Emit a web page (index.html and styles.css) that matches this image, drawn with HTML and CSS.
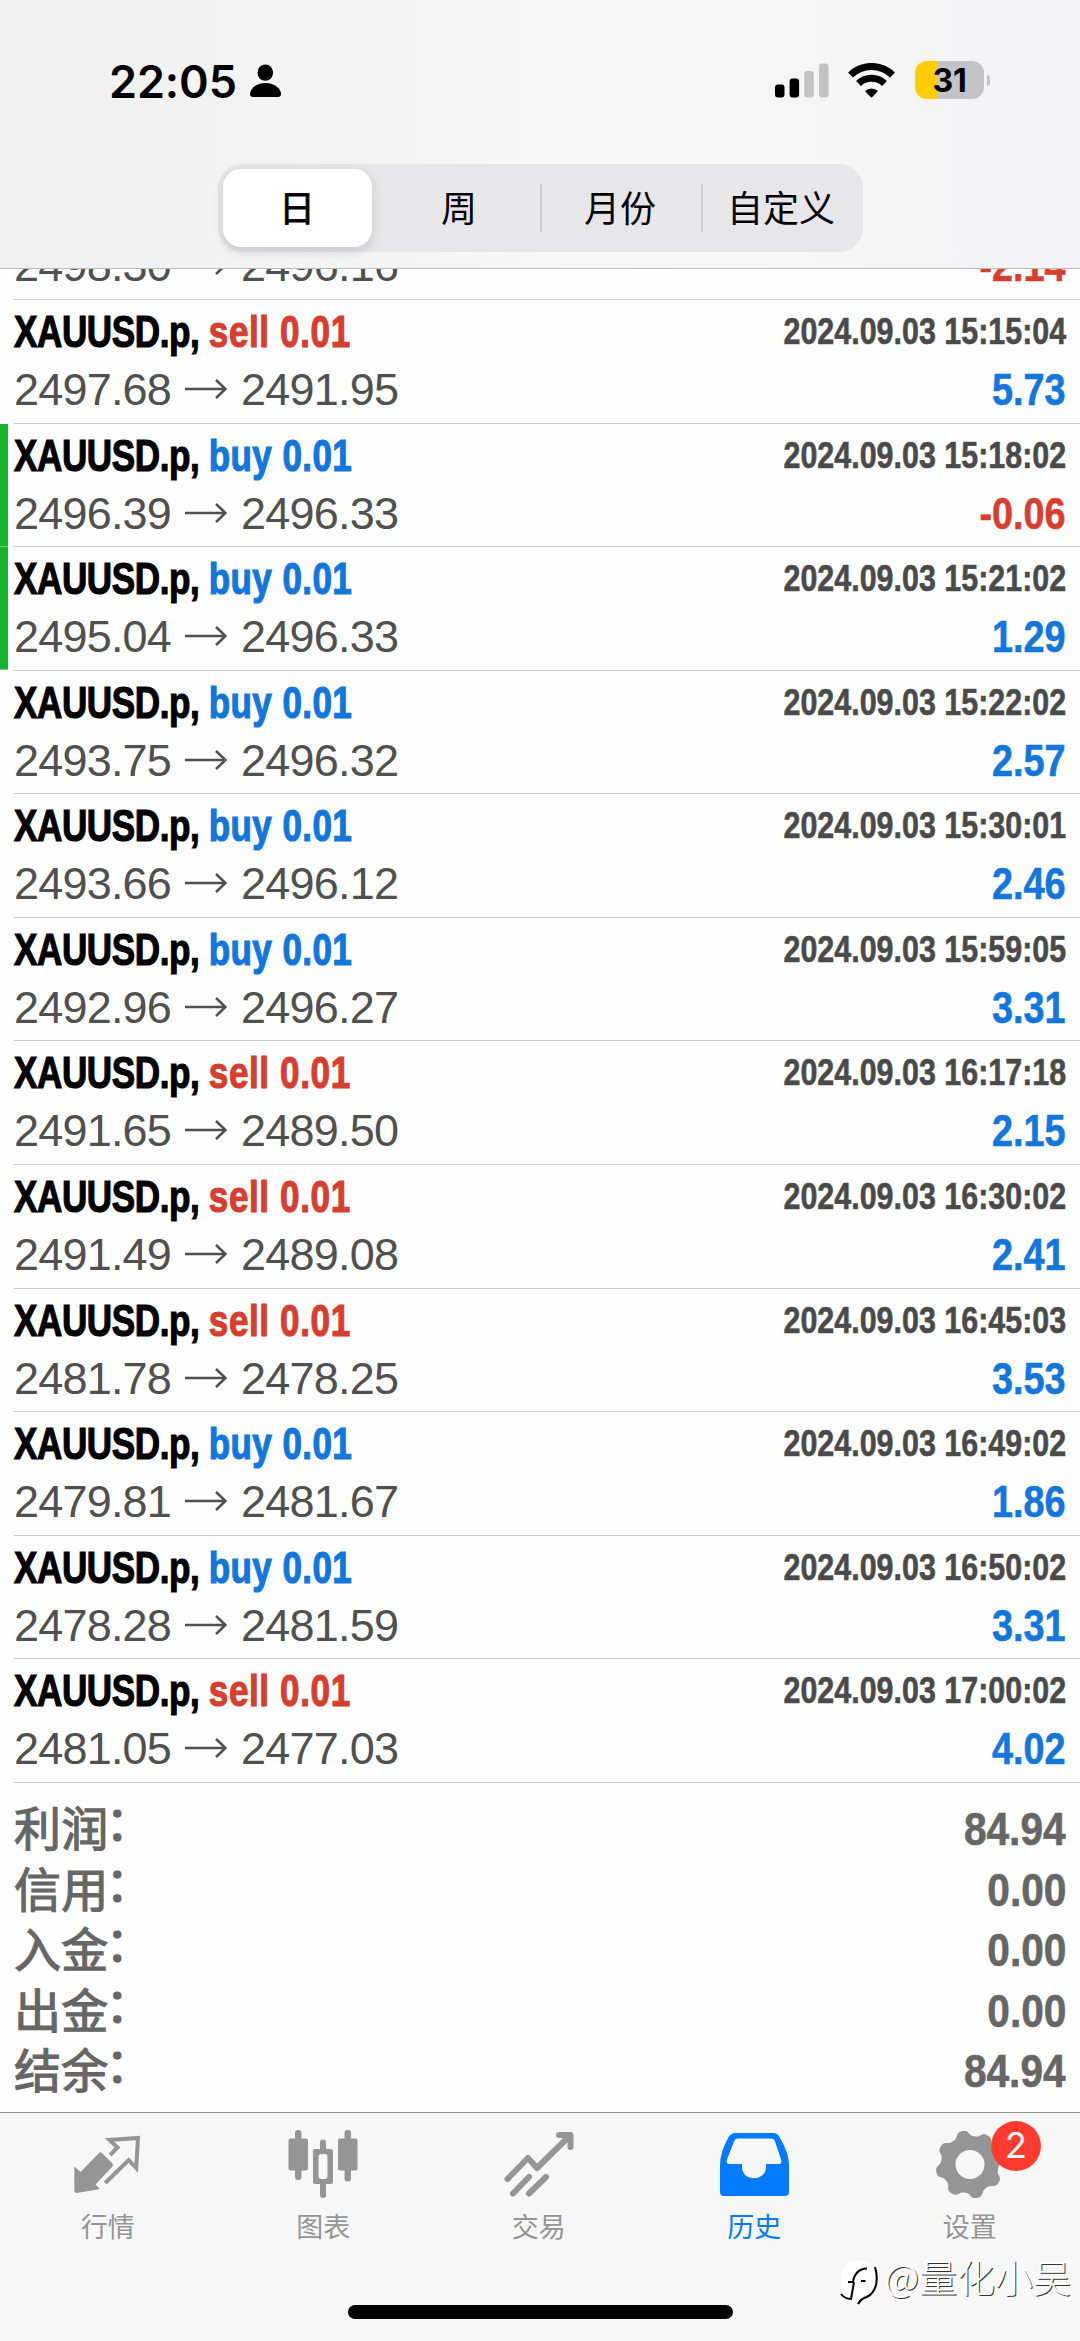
FILE: index.html
```
<!DOCTYPE html>
<html lang="zh-CN">
  <head>
    <meta charset="utf-8">
    <title>历史</title>
    <link rel="stylesheet" href="styles.css">
  </head>
  <body>
    <header class="header">
      <div class="status">
        <span class="time">22:05</span>
        <svg class="person" width="32" height="34" viewBox="250 64 32 34">
          <ellipse cx="265.3" cy="72.6" rx="7.8" ry="8.2"/>
          <path d="M250 94c0-5 6-11 15.500-11s15.500 6 15.500 11c0 2-1 3-3 3h-25c-2 0-3-1-3-3z"/>
        </svg>
        <svg class="signal" width="54" height="35" viewBox="775 62.500 54 35">
          <rect x="775" y="84" width="9.500" height="13" rx="3"/>
          <rect x="789.600" y="78" width="9.500" height="19" rx="3"/>
          <rect class="off" x="804.300" y="70.500" width="9.500" height="26.500" rx="3"/>
          <rect class="off" x="819" y="63" width="9.500" height="34" rx="3"/>
        </svg>
        <svg class="wifi" width="47" height="35" viewBox="848 62.500 47 35">
          <path class="arc" d="M850.500 74.500a30 30 0 0 1 42 0M858.500 83a19 19 0 0 1 26 0"/>
          <path d="M865 90.500a9.500 9.500 0 0 1 13 0l-5.300 5.800q-1.200 1.200-2.400 0z"/>
        </svg>
        <div class="battery"><span>31</span></div>
        <i class="nub"></i>
      </div>
      <nav class="segments">
        <a class="seg on">日</a>
        <a class="seg">周</a>
        <a class="seg line">月份</a>
        <a class="seg line">自定义</a>
      </nav>
    </header>

    <div id="deals"></div>

    <div class="summary">
      <p><b>利润<i>：</i></b><span>84.94</span></p>
      <p><b>信用<i>：</i></b><span>0.00</span></p>
      <p><b>入金<i>：</i></b><span>0.00</span></p>
      <p><b>出金<i>：</i></b><span>0.00</span></p>
      <p><b>结余<i>：</i></b><span>84.94</span></p>
    </div>

    <footer class="tabs">
      <a class="tab">
        <svg width="80" height="76" viewBox="68 2126 80 76">
          <path d="M74.300 2166.500l6.200 5.500 18.500-19q1.500-1.500 3 0l10.500 10.500q1 1.500 0 3l-17 18 4 4q0 1-2 1l-21 3.500q-2.200 0-2.200-2z"/>
          <path class="thin" d="M110 2155l7.500-7.500-8-7.500 28.500-2-1.800 30-7.500-8-23.500 23"/>
        </svg>
        <span>行情</span>
      </a>
      <a class="tab">
        <svg width="80" height="76" viewBox="283 2126 80 76">
          <rect x="288.500" y="2138.500" width="19.500" height="32" rx="2"/>
          <rect x="295" y="2130" width="6.500" height="50" rx="3"/>
          <rect x="338" y="2138.500" width="19.500" height="32" rx="2"/>
          <rect x="344.500" y="2130" width="6.500" height="51.500" rx="3"/>
          <path fill-rule="evenodd" d="M320 2149v-6.500q0-3 3-3t3 3v6.500h5q2 0 2 2v31q0 2-2 2h-5v11q0 3-3 3t-3-3v-11h-5q-2 0-2-2v-31q0-2 2-2zM321.500 2154q-3 0-3 3v19q0 3 3 3h3q3 0 3-3v-19q0-3-3-3z"/>
        </svg>
        <span>图表</span>
      </a>
      <a class="tab">
        <svg width="80" height="76" viewBox="499 2126 80 76">
          <path class="stroke" d="M507.500 2179l20.500-21 9 10 33-32.500M559 2135h11.500v12M513 2193.500l16-16.500M529 2193.500l17-16.500"/>
        </svg>
        <span>交易</span>
      </a>
      <a class="tab on">
        <svg width="80" height="76" viewBox="714 2126 80 76">
          <path fill-rule="evenodd" d="M735 2133h38q5 0 7 5 9 15 9 27v27q0 4-4 4h-61q-4 0-4-4v-27q0-12 8-27 3-5 7-5zM738 2138.500q-3 0-4 3l-7 18q-1 4.500 2 4.500h13v3c0 15 24 15 24 0v-3h13q3 0 2-4.500l-6-18q-1-3-4-3z"/>
        </svg>
        <span>历史</span>
      </a>
      <a class="tab">
        <svg width="80" height="76" viewBox="930 2126 80 76">
          <path id="gear" fill-rule="evenodd" d=""/>
        </svg>
        <span>设置</span>
        <em class="badge">2</em>
      </a>
      <i class="home"></i>
    </footer>

    <div class="watermark">
      <svg width="40" height="46" viewBox="838 2260 40 46">
        <path class="bubble" d="M858 2261c12 0 17 5 17 18s-5 17-12 18l-6 5-3-4c-10 0-14-5-14-18 0-14 5-19 18-19z"/>
        <path class="mark" d="M840 2294q4 5 10 5l3-17M847 2282h5q2-13 14-13.500M860 2281h4.500M874 2267q4 14-1 23-3 6-10 8-4 2-6 6"/>
      </svg>
      <span>@量化小吴</span>
    </div>

    <script>
      // type, open, close, time, profit, marked
      var deals = [
        ["sell", "2498.30", "2496.16", "2024.09.03 15:12:02", "-2.14"],
        ["sell", "2497.68", "2491.95", "2024.09.03 15:15:04", "5.73"],
        ["buy", "2496.39", "2496.33", "2024.09.03 15:18:02", "-0.06", 1],
        ["buy", "2495.04", "2496.33", "2024.09.03 15:21:02", "1.29", 1],
        ["buy", "2493.75", "2496.32", "2024.09.03 15:22:02", "2.57"],
        ["buy", "2493.66", "2496.12", "2024.09.03 15:30:01", "2.46"],
        ["buy", "2492.96", "2496.27", "2024.09.03 15:59:05", "3.31"],
        ["sell", "2491.65", "2489.50", "2024.09.03 16:17:18", "2.15"],
        ["sell", "2491.49", "2489.08", "2024.09.03 16:30:02", "2.41"],
        ["sell", "2481.78", "2478.25", "2024.09.03 16:45:03", "3.53"],
        ["buy", "2479.81", "2481.67", "2024.09.03 16:49:02", "1.86"],
        ["buy", "2478.28", "2481.59", "2024.09.03 16:50:02", "3.31"],
        ["sell", "2481.05", "2477.03", "2024.09.03 17:00:02", "4.02"]
      ];
      var arrow = '<svg class="arrow" width="42" height="20" viewBox="0 0 42 20"><path d="M0 10h40M31 1l9.500 9-9.500 9"/></svg>';
      var html = "";
      for (var i = 0; i < deals.length; i++) {
        var d = deals[i];
        html += '<div class="deal' + (d[5] ? ' marked' : '') + '"><div class="body">' +
          '<div class="top"><span class="symbol">XAUUSD.p, <span class="' + d[0] + '">' + d[0] + ' 0.01</span></span>' +
          '<span class="date">' + d[3] + '</span></div>' +
          '<div class="bottom"><span class="price">' + d[1] + arrow + d[2] + '</span>' +
          '<span class="profit ' + (d[4] < 0 ? 'sell' : 'buy') + '">' + d[4] + '</span></div></div></div>';
      }
      document.getElementById("deals").innerHTML = html;

      // gear outline with 8 rounded teeth
      var g = "";
      for (var a = 0; a < 360; a += 3) {
        var t = a * Math.PI / 180;
        var r = 31.4 + 3 * Math.tanh(1.6 * Math.cos(8 * (a - 32) * Math.PI / 180));
        g += (a ? "L" : "M") + (969.7 + r * Math.cos(t)).toFixed(1) + " " + (2164.5 + r * Math.sin(t)).toFixed(1);
      }
      g += "zM955.500 2164.500a14.500 14.500 0 1 0 29 0a14.500 14.500 0 1 0-29 0z";
      document.getElementById("gear").setAttribute("d", g);
    </script>
  </body>
</html>
```
FILE: styles.css
```
body {
  margin: 0;
  width: 1080px;
  height: 2341px;
  overflow: hidden;
  position: relative;
  background: #fefefe;
  font-family: "Liberation Sans", "Noto Sans CJK SC", sans-serif;
}

/* header */
.header {
  position: relative;
  z-index: 1;
  box-sizing: border-box;
  height: 269px;
  border-bottom: 1px solid #b8babb;
  background: linear-gradient(90deg, #f0f0f0, #f5f4f5 30%, #f6f6f6 60%, #f4f4f6);
}
.status {
  box-sizing: border-box;
  height: 164px;
  padding: 62px 90px 0 109px;
  display: flex;
  align-items: flex-start;
}
.time {
  width: 141px;
  font: 600 45px/39px Inter, sans-serif;
  letter-spacing: -0.1px;
}
.person { margin-top: 2px; }
.signal { margin: 1px 19px 0 auto; }
.wifi { margin: 1px 20px 0 0; }
.off { fill: #c3c3c4; }
.arc {
  fill: none;
  stroke: #000;
  stroke-width: 7;
}
.battery {
  width: 69px;
  height: 38px;
  margin-top: -1px;
  border-radius: 12px;
  background: linear-gradient(90deg, #fecd02 22px, #c3c4c6 22px);
  font: 700 32px/39px Inter, sans-serif;
  letter-spacing: -.3px;
  text-align: center;
}
.nub {
  width: 3px;
  height: 11px;
  margin: 13px 0 0 3px;
  border-radius: 0 4px 4px 0;
  background: #c3c4c6;
}
.segments {
  box-sizing: border-box;
  width: 645px;
  height: 88px;
  margin: 0 auto;
  padding: 5px 0;
  display: flex;
  border-radius: 24px;
  background: #e7e7e9;
}
.seg {
  box-sizing: border-box;
  width: 161px;
  height: 78px;
  font: 36px/75px "Noto Sans CJK SC", sans-serif;
  text-align: center;
}
.seg.on {
  width: 149px;
  margin: 0 7px 0 5px;
  border-radius: 18px;
  background: #fff;
  box-shadow: 0 4px 12px rgba(0, 0, 0, .14);
  -webkit-text-stroke: .8px #000;
}
.seg.line {
  background: linear-gradient(#d0d0d3, #d0d0d3) 0 50% / 2px 48px no-repeat;
}

/* deals */
#deals { margin-top: -92.700px; }
.deal {
  box-sizing: border-box;
  height: 123.600px;
  padding-left: 14px;
}
.marked {
  background: linear-gradient(#18b32f, #18b32f) 0 0 / 8px 122.600px no-repeat;
}
.body {
  box-sizing: border-box;
  height: 100%;
  padding-right: 14px;
  border-bottom: 1px solid #cbcbcc;
}
.top, .bottom {
  display: flex;
  justify-content: space-between;
  align-items: baseline;
  height: 58px;
  line-height: 58px;
  white-space: nowrap;
}
.top { padding-top: 3px; }

/* condensed bold */
.symbol, .date, .profit, .summary span {
  font: bold 45px/58px "Liberation Sans", sans-serif;
  transform: scaleX(.84);
  transform-origin: 100% 50%;
  -webkit-text-stroke: .6px;
}
.symbol {
  transform: scaleX(.779);
  transform-origin: 0 50%;
  letter-spacing: -.5px;
  -webkit-text-stroke: 1.200px;
}
.symbol span { letter-spacing: .5px; }
.symbol .sell { letter-spacing: .8px; }
.date {
  position: relative;
  top: -3px;
  color: #4a4a4a;
  font-size: 37.500px;
  transform: scaleX(.812);
}
.price {
  color: #505050;
  font-size: 45px;
  letter-spacing: -.8px;
}
.arrow {
  margin: 0 14px 6px 14px;
  fill: none;
  stroke: #505050;
  stroke-width: 2.500;
}
.sell { color: #d63f30; }
.buy { color: #1276dc; }

/* totals */
.summary {
  padding: 15px 14px 0;
  color: #666;
}
.summary p {
  margin: 0;
  height: 60.500px;
  display: flex;
  justify-content: space-between;
}
.summary b {
  font: 400 47px/56px "Noto Sans CJK SC", sans-serif;
  letter-spacing: .3px;
  -webkit-text-stroke: 1.200px #666;
}
.summary i {
  position: relative;
  left: -3px;
  top: -6px;
  font-style: normal;
}
.summary span {
  font-size: 47px;
  line-height: 62px;
  transform: scaleX(.865);
}

/* tab bar */
.tabs {
  position: absolute;
  left: 0;
  top: 2112px;
  box-sizing: border-box;
  width: 1080px;
  height: 229px;
  border-top: 1px solid #929294;
  background: #f7f7f7;
  display: flex;
}
.tab {
  position: relative;
  width: 215.500px;
  padding-top: 13px;
  display: flex;
  flex-direction: column;
  align-items: center;
  color: #959595;
  font: 27px/40px "Noto Sans CJK SC", sans-serif;
}
.tab svg { fill: currentColor; }
.tab span { margin-top: 4px; }
.tab.on { color: #007aff; }
.tab .thin, .tab .stroke {
  fill: none;
  stroke: currentColor;
  stroke-width: 4;
}
.tab .stroke {
  stroke-width: 6;
  stroke-linecap: round;
  stroke-linejoin: round;
}
.badge {
  position: absolute;
  left: 129px;
  top: 8px;
  width: 50px;
  height: 50px;
  border-radius: 50%;
  background: #ff3b30;
  color: #fff;
  font: 36px/49px Inter, sans-serif;
  text-align: center;
}
.home {
  position: absolute;
  left: 348px;
  bottom: 22px;
  width: 385px;
  height: 14px;
  border-radius: 7px;
  background: #000;
}
.watermark {
  position: absolute;
  right: 9px;
  top: 2254px;
  display: flex;
  color: #fff;
  font: 300 38px/44px "Noto Sans CJK SC", sans-serif;
  text-shadow: 1px 1px 0 #333;
}
.watermark svg { margin-top: 6px; }
.watermark span { margin-left: 5px; }
.bubble { fill: #fff; }
.mark {
  fill: none;
  stroke: #000;
  stroke-width: 2;
}
```
